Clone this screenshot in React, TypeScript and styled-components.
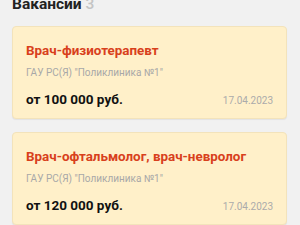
import { FC } from "react";
import styled, { createGlobalStyle } from "styled-components";

type Vacancy = {
  title: string;
  org: string;
  salary: string;
  date: string;
};

const vacancies: Vacancy[] = [
  {
    title: "Врач-физиотерапевт",
    org: "ГАУ РС(Я) \"Поликлиника №1\"",
    salary: "от 100 000 руб.",
    date: "17.04.2023",
  },
  {
    title: "Врач-офтальмолог, врач-невролог",
    org: "ГАУ РС(Я) \"Поликлиника №1\"",
    salary: "от 120 000 руб.",
    date: "17.04.2023",
  },
  {
    title: "Врач-терапевт участковый",
    org: "ГАУ РС(Я) \"Поликлиника №1\"",
    salary: "от 90 000 руб.",
    date: "17.04.2023",
  },
];

const App: FC = () => {
  return (
    <>
      <GlobalStyle />
      <Page>
        <Heading>
          Вакансии <Count>{vacancies.length}</Count>
        </Heading>
        <List>
          {vacancies.map((v) => (
            <Card key={v.title}>
              <Title>{v.title}</Title>
              <Org>{v.org}</Org>
              <Bottom>
                <Salary>{v.salary}</Salary>
                <DateText>{v.date}</DateText>
              </Bottom>
            </Card>
          ))}
        </List>
      </Page>
    </>
  );
};

export default App;

const GlobalStyle = createGlobalStyle`
  html, body {
    margin: 0;
    padding: 0;
    background: #f1f1f1;
    overflow: hidden;
  }
  body {
    font-family: Roboto, "Noto Sans", sans-serif;
  }
`;

const Page = styled.main`
  padding: 0 13px 0 12px;
`;

const Heading = styled.h1`
  margin: -6px 0 12px;
  font-size: 15.5px;
  line-height: 20px;
  font-weight: 700;
  color: #222;
`;

const Count = styled.span`
  color: #c4c4c4;
  font-weight: 500;
`;

const List = styled.div`
  display: flex;
  flex-direction: column;
  gap: 13px;
`;

const Card = styled.article`
  background: #fff0c9;
  border: 1px solid #f3e3bb;
  border-radius: 4px;
  box-shadow: 0 1px 1px rgba(0, 0, 0, 0.06);
  padding: 15px 13px 9px 13px;
`;

const Title = styled.h2`
  margin: 0;
  font-size: 13.4px;
  line-height: 18px;
  font-weight: 700;
  color: #d8401c;
`;

const Org = styled.div`
  margin-top: 6px;
  font-size: 10px;
  line-height: 14px;
  color: #a8a8a8;
`;

const Bottom = styled.div`
  margin-top: 9px;
  display: flex;
  justify-content: space-between;
  align-items: baseline;
`;

const Salary = styled.div`
  font-size: 13.5px;
  line-height: 20px;
  font-weight: 700;
  color: #111;
`;

const DateText = styled.div`
  font-size: 10px;
  color: #ababab;
`;
